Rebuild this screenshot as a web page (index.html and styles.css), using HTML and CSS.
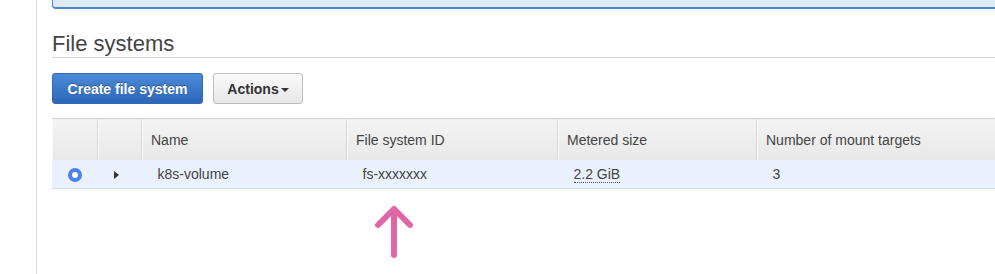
FILE: index.html
```html
<!DOCTYPE html>
<html lang="en">
<head>
    <meta charset="UTF-8">
    <title>File systems</title>
    <link rel="stylesheet" href="styles.css">
</head>
<body>
    <div class="layout">
        <div class="sidebar"></div>
        <div class="main">
            <div class="notice"></div>
            <h2 class="title">File systems</h2>
            <div class="toolbar">
                <button class="btn btn-primary">Create file system</button>
                <button class="btn btn-default">Actions<span class="caret"></span></button>
            </div>
            <table class="grid">
                <thead>
                    <tr>
                        <th class="col-select"></th>
                        <th class="col-expand"></th>
                        <th class="col-name">Name</th>
                        <th class="col-id">File system ID</th>
                        <th class="col-size">Metered size</th>
                        <th>Number of mount targets</th>
                    </tr>
                </thead>
                <tbody>
                    <tr class="selected">
                        <td class="cell-center"><span class="radio"></span></td>
                        <td class="cell-center"><span class="expander"></span></td>
                        <td>k8s-volume</td>
                        <td>fs-xxxxxxx</td>
                        <td><span class="dotted">2.2 GiB</span></td>
                        <td>3</td>
                    </tr>
                </tbody>
            </table>
            <div class="pointer">
                <svg width="44" height="58" viewBox="0 0 44 58">
                    <path d="M22 5 L22 51 M6 21 L22 5 L38 21" fill="none" stroke="#e066a6" stroke-width="6" stroke-linecap="round" stroke-linejoin="round"/>
                </svg>
            </div>
        </div>
    </div>
</body>
</html>
```

FILE: styles.css
```css
body {
    margin: 0;
    font-family: Arial, "Liberation Sans", sans-serif;
    background-color: #fff;
    color: #444;
}

.layout {
    display: flex;
    height: 274px;
    overflow: hidden;
}

.sidebar {
    width: 36px;
    border-right: 1px solid #dcdcdc;
    flex-shrink: 0;
}

.main {
    flex: 1;
    padding-left: 15px;
}

.notice {
    height: 7px;
    background-color: #dbeaf5;
    border-left: 1px solid #4a86d4;
    border-bottom: 2px solid #4a86d4;
    border-bottom-left-radius: 4px;
}

.title {
    margin: 22px 0 0 0;
    font-size: 22px;
    font-weight: normal;
    color: #444;
    line-height: 26px;
    border-bottom: 1px solid #d5d5d5;
}

.toolbar {
    display: flex;
    gap: 10px;
    margin-top: 15px;
}

.btn {
    height: 31px;
    font-family: Arial, "Liberation Sans", sans-serif;
    font-size: 14px;
    font-weight: bold;
    border-radius: 3px;
    padding: 0 10px;
    white-space: nowrap;
    cursor: pointer;
}

.btn-primary {
    width: 151px;
    color: #fff;
    background: linear-gradient(#4d8ad8, #2c66b8);
    border: 1px solid #2f68b5;
    text-shadow: 0 -1px 0 rgba(0, 0, 0, 0.3);
}

.btn-default {
    width: 90px;
    color: #333;
    background: linear-gradient(#fbfbfb, #e6e6e6);
    border: 1px solid #bdbdbd;
}

.caret {
    display: inline-block;
    margin-left: 2px;
    vertical-align: middle;
    border-left: 4px solid transparent;
    border-right: 4px solid transparent;
    border-top: 4px solid #333;
}

.grid {
    margin-top: 14px;
    border-collapse: collapse;
    width: 960px;
    font-size: 14px;
}

.grid th {
    height: 40px;
    text-align: left;
    font-weight: normal;
    color: #444;
    padding: 1px 9px 0 9px;
    background: linear-gradient(#f3f3f3, #e8e8e8);
    border-top: 1px solid #d5d5d5;
    border-left: 1px solid #d8d8d8;
    box-shadow: inset 1px 0 0 #fafafa;
}

.grid th:first-child {
    border-left: none;
}

.col-select {
    width: 27px;
}

.col-expand {
    width: 25px;
}

.col-name {
    width: 186px;
}

.col-id {
    width: 192px;
}

.col-size {
    width: 180px;
}

.grid td {
    height: 28px;
    padding: 0 16px;
    color: #444;
    border-bottom: 1px solid #d5dde6;
}

.selected td {
    background-color: #e9f2fc;
}

.grid td.cell-center {
    padding: 0;
    text-align: center;
}

.radio {
    display: inline-block;
    width: 6px;
    height: 6px;
    border: 4px solid #4a82ee;
    background-color: #fff;
    border-radius: 50%;
    vertical-align: middle;
}

.expander {
    display: inline-block;
    border-top: 4px solid transparent;
    border-bottom: 4px solid transparent;
    border-left: 5px solid #333;
    vertical-align: middle;
    margin-right: 7px;
}

.dotted {
    border-bottom: 1px dotted #555;
}

.pointer {
    margin-top: 15px;
    margin-left: 320px;
}
```
